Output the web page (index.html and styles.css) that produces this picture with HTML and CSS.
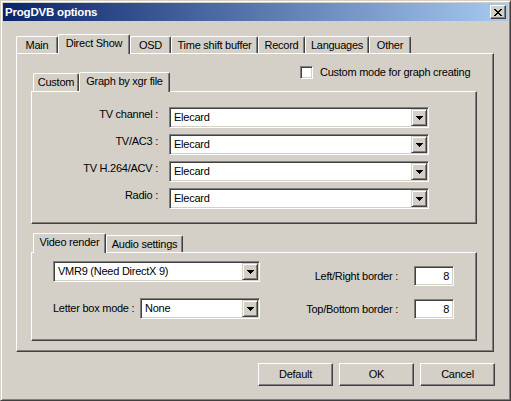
FILE: index.html
```html
<!DOCTYPE html>
<html>
<head>
<meta charset="utf-8">
<link rel="stylesheet" href="styles.css">
</head>
<body>
<div class="window">
  <div class="titlebar">
    <span class="title">ProgDVB options</span>
    <div class="close">
      <svg width="8" height="7" viewBox="0 0 8 7" shape-rendering="crispEdges"><path d="M0 0h2v1h-2zM6 0h2v1h-2zM1 1h2v1h-2zM5 1h2v1h-2zM2 2h4v1h-4zM3 3h2v1h-2zM2 4h4v1h-4zM1 5h2v1h-2zM5 5h2v1h-2zM0 6h2v1h-2zM6 6h2v1h-2z" fill="#000"/></svg>
    </div>
  </div>
  <div class="client">
    <div class="tabs outer-tabs">
      <div class="tab t-main">Main</div>
      <div class="tab sel t-ds">Direct Show</div>
      <div class="tab t-osd">OSD</div>
      <div class="tab t-tsb">Time shift buffer</div>
      <div class="tab t-rec">Record</div>
      <div class="tab t-lang">Languages</div>
      <div class="tab t-other">Other</div>
    </div>
    <div class="panel outer-panel">
      <div class="graph-head">
        <div class="tabs inner-tabs">
          <div class="tab t-custom">Custom</div>
          <div class="tab sel t-graph">Graph by xgr file</div>
        </div>
        <div class="check">
          <span class="checkbox"></span>
          <span>Custom mode for graph creating</span>
        </div>
      </div>
      <div class="panel graph-panel">
        <div class="graph-grid">
          <span class="lbl">TV channel :</span>
          <div class="combo wide"><span class="ctext">Elecard</span><span class="dbtn"><svg width="7" height="4" viewBox="0 0 7 4" shape-rendering="crispEdges"><path d="M0 0H7V1H6V2H5V3H4V4H3V3H2V2H1V1H0Z" fill="#000"/></svg></span></div>
          <span class="lbl">TV/AC3 :</span>
          <div class="combo wide"><span class="ctext">Elecard</span><span class="dbtn"><svg width="7" height="4" viewBox="0 0 7 4" shape-rendering="crispEdges"><path d="M0 0H7V1H6V2H5V3H4V4H3V3H2V2H1V1H0Z" fill="#000"/></svg></span></div>
          <span class="lbl">TV H.264/ACV :</span>
          <div class="combo wide"><span class="ctext">Elecard</span><span class="dbtn"><svg width="7" height="4" viewBox="0 0 7 4" shape-rendering="crispEdges"><path d="M0 0H7V1H6V2H5V3H4V4H3V3H2V2H1V1H0Z" fill="#000"/></svg></span></div>
          <span class="lbl">Radio :</span>
          <div class="combo wide"><span class="ctext">Elecard</span><span class="dbtn"><svg width="7" height="4" viewBox="0 0 7 4" shape-rendering="crispEdges"><path d="M0 0H7V1H6V2H5V3H4V4H3V3H2V2H1V1H0Z" fill="#000"/></svg></span></div>
        </div>
      </div>
      <div class="tabs inner-tabs video-tabs">
        <div class="tab sel t-video">Video render</div>
        <div class="tab t-audio">Audio settings</div>
      </div>
      <div class="panel video-panel">
        <div class="vleft">
          <div class="combo vmr"><span class="ctext">VMR9 (Need DirectX 9)</span><span class="dbtn"><svg width="7" height="4" viewBox="0 0 7 4" shape-rendering="crispEdges"><path d="M0 0H7V1H6V2H5V3H4V4H3V3H2V2H1V1H0Z" fill="#000"/></svg></span></div>
          <div class="lbrow">
            <span class="lbl2">Letter box mode :</span>
            <div class="combo none"><span class="ctext">None</span><span class="dbtn"><svg width="7" height="4" viewBox="0 0 7 4" shape-rendering="crispEdges"><path d="M0 0H7V1H6V2H5V3H4V4H3V3H2V2H1V1H0Z" fill="#000"/></svg></span></div>
          </div>
        </div>
        <div class="vright">
          <div class="erow"><span class="lbl2">Left/Right border :</span><div class="edit">8</div></div>
          <div class="erow"><span class="lbl2">Top/Bottom border :</span><div class="edit">8</div></div>
        </div>
      </div>
    </div>
    <div class="buttons">
      <div class="btn">Default</div>
      <div class="btn">OK</div>
      <div class="btn">Cancel</div>
    </div>
  </div>
</div>
</body>
</html>
```

FILE: styles.css
```css
* { box-sizing: border-box; }
html, body { margin: 0; padding: 0; background: #d4d0c8; }
body {
  font-family: "Liberation Sans", Arial, sans-serif;
  font-size: 11px;
  letter-spacing: -0.25px;
  color: #000;
  width: 511px;
  height: 401px;
  overflow: hidden;
}
.window {
  width: 511px;
  height: 401px;
  background: #d4d0c8;
  border: 1px solid;
  border-color: #d4d0c8 #404040 #404040 #d4d0c8;
  box-shadow: inset 1px 1px #fff, inset -1px -1px #808080;
  padding: 2px;
  display: flex;
  flex-direction: column;
}
.titlebar {
  height: 18px;
  background: linear-gradient(to right, #0a246a, #a6caf0);
  display: flex;
  align-items: center;
  padding: 0 2px 0 2px;
}
.title {
  color: #fff;
  font-weight: bold;
  font-size: 11.5px;
  font-family: "Liberation Sans", Arial, sans-serif;
  letter-spacing: -0.2px;
  flex: 1;
}
.close {
  width: 16px;
  height: 14px;
  background: #d4d0c8;
  border: 1px solid;
  border-color: #fff #404040 #404040 #fff;
  box-shadow: inset -1px -1px #808080;
  display: flex;
  align-items: center;
  justify-content: center;
  padding-right: 1px;
}
.close svg { display: block; }
.client {
  flex: 1;
  padding: 13px 13px 0 13px;
  display: flex;
  flex-direction: column;
}
.tabs {
  display: flex;
  align-items: flex-end;
  position: relative;
  z-index: 1;
}
.outer-tabs { height: 19px; }
.tab {
  height: 17px;
  border-top: 1px solid #fff;
  border-left: 1px solid #fff;
  border-right: 1px solid #404040;
  box-shadow: inset -1px 0 #808080;
  border-radius: 2px 2px 0 0;
  text-align: center;
  line-height: 13px;
  padding-top: 2px;
  white-space: nowrap;
  background: #d4d0c8;
}
.tab.sel {
  height: 20px;
  margin-bottom: -1px;
}
.t-main { width: 42px; }
.t-ds { width: 72px; }
.t-osd { width: 41px; }
.t-tsb { width: 87px; }
.t-rec { width: 47px; }
.t-lang { width: 64px; }
.t-other { width: 42px; }
.panel {
  border: 1px solid;
  border-color: #fff #404040 #404040 #fff;
  box-shadow: inset -1px -1px #808080;
}
.outer-panel {
  width: 478px;
  height: 299px;
  padding: 0 0 0 14px;
  display: flex;
  flex-direction: column;
}
.graph-head {
  height: 37px;
  display: flex;
  align-items: flex-end;
}
.inner-tabs { padding-left: 2px; }
.t-custom { width: 46px; height: 18px; }
.t-graph { width: 91px; height: 22px; }
.check {
  align-self: flex-start;
  margin-top: 12px;
  margin-left: 130px;
  display: flex;
  align-items: center;
  gap: 7px;
  line-height: 13px;
}
.checkbox {
  width: 13px;
  height: 13px;
  background: #fff;
  border: 1px solid;
  border-color: #808080 #fff #fff #808080;
  box-shadow: inset 1px 1px #404040, inset -1px -1px #d4d0c8;
}
.graph-panel {
  width: 446px;
  height: 133px;
  padding: 15px 0 0 0;
}
.graph-grid {
  display: grid;
  grid-template-columns: 126px 260px;
  column-gap: 11px;
  row-gap: 6px;
}
.lbl {
  text-align: right;
  line-height: 13px;
  margin-top: 1px;
  white-space: nowrap;
}
.combo {
  height: 21px;
  background: #fff;
  border: 1px solid;
  border-color: #808080 #fff #fff #808080;
  box-shadow: inset 1px 1px #404040, inset -1px -1px #d4d0c8;
  padding: 1px;
  display: flex;
  align-items: stretch;
}
.ctext {
  flex: 1;
  padding-left: 3px;
  line-height: 17px;
  white-space: nowrap;
}
.dbtn {
  width: 16px;
  height: 17px;
  background: #d4d0c8;
  border: 1px solid;
  border-color: #d4d0c8 #404040 #404040 #d4d0c8;
  box-shadow: inset 1px 1px #fff, inset -1px -1px #808080;
  display: flex;
  align-items: center;
  justify-content: center;
}
.dbtn svg { display: block; }
.video-tabs { margin-top: 8px; height: 20px; }
.t-video { width: 73px; height: 21px; }
.t-audio { width: 77px; height: 17px; }
.video-panel {
  width: 446px;
  height: 89px;
  padding: 8px 22px 0 21px;
  display: flex;
  justify-content: space-between;
}
.vleft {
  display: flex;
  flex-direction: column;
  gap: 16px;
}
.vmr { width: 207px; }
.lbrow {
  width: 207px;
  display: flex;
  align-items: center;
  justify-content: space-between;
}
.none { width: 120px; }
.lbl2 { white-space: nowrap; line-height: 13px; }
.vright {
  display: flex;
  flex-direction: column;
  gap: 13px;
  padding-top: 5px;
  align-items: flex-end;
}
.erow {
  display: flex;
  align-items: center;
  gap: 16px;
}
.edit {
  width: 40px;
  height: 20px;
  background: #fff;
  border: 1px solid;
  border-color: #808080 #fff #fff #808080;
  box-shadow: inset 1px 1px #404040, inset -1px -1px #d4d0c8;
  text-align: right;
  padding-right: 4px;
  line-height: 18px;
}
.buttons {
  margin-top: 11px;
  display: flex;
  justify-content: flex-end;
  gap: 6px;
}
.btn {
  width: 75px;
  height: 23px;
  border: 1px solid;
  border-color: #fff #404040 #404040 #fff;
  box-shadow: inset -1px -1px #808080;
  text-align: center;
  line-height: 21px;
}
```
